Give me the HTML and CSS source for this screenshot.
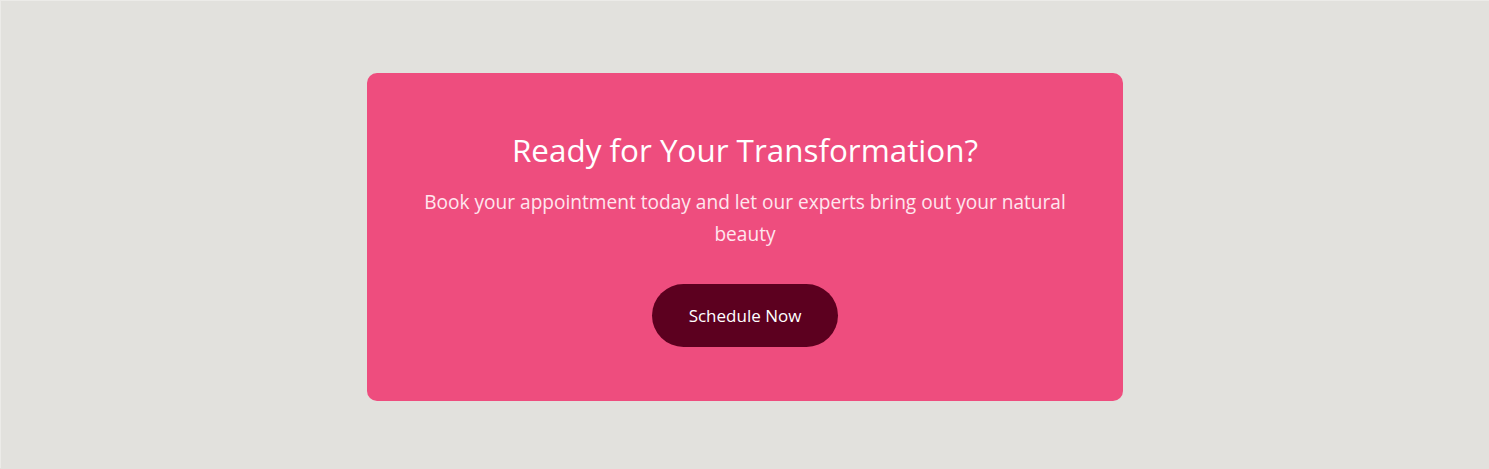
FILE: index.html
```html
<!DOCTYPE html>
<html lang="en">
<head>
<meta charset="utf-8">
<title>Ready for Your Transformation?</title>
<link rel="stylesheet" href="styles.css">
</head>
<body>
<main class="page">
  <section class="cta">
    <h2 class="cta-title">Ready for Your Transformation?</h2>
    <p class="cta-text">Book your appointment today and let our experts bring out your natural beauty</p>
    <a class="cta-button" href="#">Schedule Now</a>
  </section>
</main>
</body>
</html>
```

FILE: styles.css
```css
html, body {
  margin: 0;
  padding: 0;
}
body {
  background: #e2e1dd;
  font-family: "Open Sans", "Noto Sans", sans-serif;
  border-left: 1px solid #ecebe8;
  border-top: 1px solid #ecebe8;
  min-height: 468px;
  box-sizing: border-box;
}
.page {
  display: flex;
  justify-content: center;
  padding-top: 72px;
}
.cta {
  width: 756px;
  height: 328px;
  box-sizing: border-box;
  background: #ee4d7e;
  border-radius: 10px;
  display: flex;
  flex-direction: column;
  align-items: center;
  padding: 57px 40px 0;
  text-align: center;
}
.cta-title {
  margin: 0;
  font-weight: 400;
  font-size: 31.4px;
  line-height: 40px;
  color: #ffffff;
}
.cta-text {
  margin: 16px 0 0;
  max-width: 672px;
  font-size: 19.1px;
  line-height: 32px;
  color: #ffe6ee;
}
.cta-button {
  margin-top: 34px;
  width: 186px;
  height: 63px;
  display: flex;
  align-items: center;
  justify-content: center;
  background: #5c001f;
  color: #ffffff;
  border-radius: 32px;
  font-size: 17px;
  text-decoration: none;
}
```
